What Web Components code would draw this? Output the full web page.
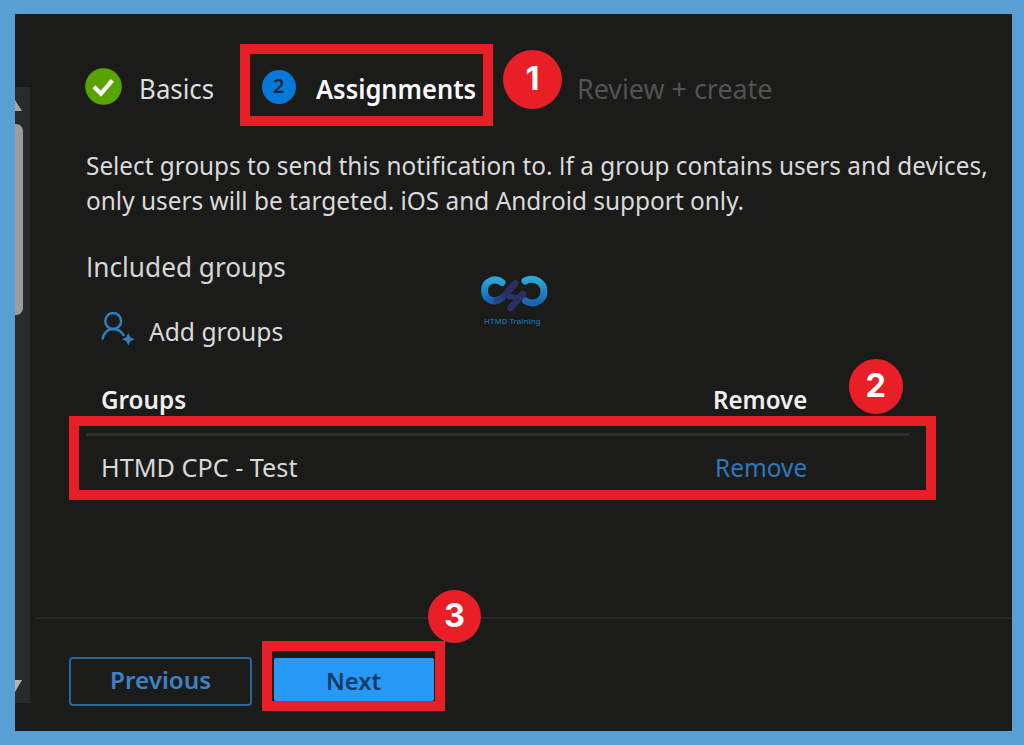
<!DOCTYPE html>
<html lang="en">
<head>
<meta charset="utf-8">
<title>Assignments</title>
<style>
html,body{margin:0;height:100%;overflow:hidden}
body{background:#589fd4;font-family:"Noto Sans","Open Sans",sans-serif}
</style>
</head>
<body>
<notification-wizard></notification-wizard>
<script>
const define = (name, html, setup) => {
  const t = document.createElement('template');
  t.innerHTML = html;
  customElements.define(name, class extends HTMLElement {
    connectedCallback() {
      if (this.shadowRoot) return;
      this.attachShadow({mode: 'open'}).append(t.content.cloneNode(true));
      if (setup) setup(this, this.shadowRoot);
    }
  });
};
const ctx = document.createElement('canvas').getContext('2d');

/* One line of text condensed or widened to a given ink width.
   The capital I is set in Open Sans, which draws it without serifs. */
define('fit-text', `
<style>
:host{display:flex;flex:none}
span{display:block;flex:none;transform-origin:0 50%;white-space:pre}
i{font-style:normal;font-family:"Open Sans",sans-serif;line-height:1}
</style><span></span>`, (el, root) => {
  const span = root.querySelector('span');
  const text = el.getAttribute('text');
  const w = +el.getAttribute('w'), size = +el.getAttribute('size');
  const weight = el.getAttribute('weight') || 400;
  span.innerHTML = text.replace(/\bI/g, '<i>I</i>');
  el.style.width = w + 'px';
  el.style.height = el.style.lineHeight = (el.getAttribute('line') || 36) + 'px';
  span.style.fontSize = size + 'px';
  span.style.fontWeight = weight;
  ctx.font = `${weight} ${size}px "Noto Sans","Open Sans",sans-serif`;
  const m = ctx.measureText(text);
  const left = -m.actualBoundingBoxLeft;
  const bearings = m.width - (m.actualBoundingBoxRight - left);
  const k = w / (span.getBoundingClientRect().width - bearings);
  span.style.transform = `translateX(${-left * k}px) scaleX(${k})`;
});

define('callout-badge', `
<style>
:host{position:absolute;box-sizing:border-box;border-radius:50%;background:#e81f27;color:#fff;
display:flex;align-items:center;justify-content:center;font:650 32.5px/1 Inter,"Liberation Sans",sans-serif;z-index:3}
</style><slot></slot>`);

define('status-dot', `
<style>
:host{display:block;flex:none;width:37px;height:37px}
svg{display:block;width:100%;height:100%}
</style>
<svg viewBox="0 0 37 37"><circle cx="18.5" cy="18.5" r="18.3" fill="#57a300"/>
<path d="M9 18.7l7 7L27.300 12.300" fill="none" stroke="#fff" stroke-width="4.2"/></svg>`);

define('step-number', `
<style>
:host{display:flex;flex:none;width:34.6px;height:34.6px;border-radius:50%;background:#0678d7;color:#0b2547;
align-items:center;justify-content:center;font-size:20px;line-height:1;font-weight:600;box-sizing:border-box;padding-bottom:1px}
</style><slot></slot>`);

define('wizard-steps', `
<style>
:host{display:flex;position:relative;height:82px}
.done{display:flex;width:155px;padding-top:24px;box-sizing:border-box}
.done fit-text{margin:3px 0 0 18.500px}
.current{box-sizing:border-box;width:252.500px;height:82px;border:10px solid #e81f27;display:flex;padding:15.5px 0 0 11.5px}
.current fit-text{margin:1.500px 0 0 20px}
.next{padding:27px 0 0 86.500px}
callout-badge{left:418px;top:6px;width:59px;height:59px}
</style>
<div class="done"><status-dot></status-dot><fit-text text="Basics" size="27.5" w="72" style="color:#dedede"></fit-text></div>
<div class="current"><step-number>2</step-number><fit-text text="Assignments" size="26.5" weight="600" w="159" style="color:#fafafa"></fit-text></div>
<div class="next"><fit-text text="Review + create" size="26.5" w="192.5" style="color:#535353"></fit-text></div>
<callout-badge>1</callout-badge>`);

define('person-add-icon', `
<style>:host{display:block;flex:none;width:34px;height:34px}svg{display:block}</style>
<svg width="34" height="34" viewBox="0 0 34 34" fill="none" stroke="#347fc4" stroke-width="2.5">
<circle cx="12.2" cy="9" r="7.9"/><path d="M1.500 27.500C2.500 21 6.500 16.900 12.200 16.900c4.700 0 8.600 2.600 10.700 7.200"/>
<path d="M27.300 20.900l2 4.300 4.300 2-4.300 2-2 4.300-2-4.300-4.300-2 4.300-2z" fill="#347fc4" stroke="none"/></svg>`);

define('groups-table', `
<style>
:host{display:block;position:relative}
.row{display:flex;align-items:flex-start}
.head{height:34px;padding:1px 0 0 17px}
.head fit-text + fit-text{margin-left:529px}
.frame{box-sizing:border-box;width:867px;height:84px;margin-left:-16px;border:10px solid #e81f27}
hr{margin:7px 17.5px 0 6.5px;border:0;height:2.5px;background:#302e2d}
.body{padding:13.500px 0 0 23.5px}
.body fit-text + fit-text{margin:1px 0 0 419.5px}
callout-badge{left:763.500px;top:-22px;width:54.5px;height:54.5px}
</style>
<div class="row head"><fit-text text="Groups" size="24.5" weight="600" w="84" style="color:#efefef"></fit-text><fit-text text="Remove" size="24.5" weight="600" w="92" style="color:#efefef"></fit-text></div>
<div class="frame"><hr><div class="row body"><fit-text text="HTMD CPC - Test" size="25" w="194.5" style="color:#d8d8d8"></fit-text><fit-text text="Remove" size="24.5" w="89.5" style="color:#2f77bd"></fit-text></div></div>
<callout-badge>2</callout-badge>`);

define('brand-mark', `
<style>
:host{position:absolute;left:464px;top:259px;width:72px;text-align:center}
svg{display:block;width:72px;height:42px}
fit-text{margin:1px 0 0 5px;color:#16699f}
</style>
<svg viewBox="0 0 72 42" fill="none" stroke-linecap="round">
<defs>
<linearGradient id="a" x1="0" y1="0" x2="0" y2="1"><stop offset="0" stop-color="#2ba6d6"/><stop offset="1" stop-color="#1763b4"/></linearGradient>
<linearGradient id="b" x1="0" y1="1" x2="1" y2="0"><stop offset="0" stop-color="#22478a"/><stop offset=".5" stop-color="#2d2d63"/></linearGradient>
</defs>
<path d="M23 9.500C16 4 5.500 8 5.500 17.500c0 8.500 8 12.500 14.500 9" stroke="url(#a)" stroke-width="7"/>
<path d="M46 8c9-4.500 19 1 19 10.500 0 9-9.500 14.500-18.500 9.500" stroke="url(#a)" stroke-width="7"/>
<path d="M17 28c7-1 12-11 19.500-17.500" stroke="url(#b)" stroke-width="6.500"/>
<path d="M30 24c4-2 6 2 9 0" stroke="#2a3470" stroke-width="5"/>
<path d="M31.500 35L44 21" stroke="#2a3067" stroke-width="6.500"/>
</svg>
<fit-text text="HTMD Training" size="7.5" line="10" weight="600" w="57"></fit-text>`);

define('side-scrollbar', `
<style>
:host{display:flex;flex-direction:column;box-sizing:border-box;width:15px;height:616px;margin-top:73px;background:#292a2a}
svg{display:block;flex:none}
.thumb{width:8px;height:191px;margin-top:1px;border-radius:0 7px 7px 0;background:#9c9c9c}
.down{margin-top:auto}
</style>
<svg width="15" height="36" viewBox="0 0 15 36"><path d="M0 13l7 11H0z" fill="#a5a5a5"/></svg>
<div class="thumb"></div>
<svg class="down" width="15" height="26" viewBox="0 0 15 26"><path d="M0 3h7L0 15z" fill="#b4b4b4"/></svg>`);

define('action-bar', `
<style>
:host{display:flex;position:relative;box-sizing:border-box;height:114px;border-top:2px solid #262625;margin-left:5px}
button{box-sizing:border-box;display:flex;margin:0;font:inherit;padding:0}
.prev{margin:38.5px 0 0 34px;width:183px;height:49px;border:2px solid #2a6596;border-radius:4px;background:none;color:#3e82c6;padding:3px 0 0 41px}
.frame{box-sizing:border-box;width:183px;height:70px;margin:22.5px 0 0 10px;border:10px solid #e81f27;padding:6.500px 1px 0 2px}
.next{width:160px;height:43.500px;border:0;border-radius:2px;background:#2699f7;color:#0f3a64;padding:5px 0 0 54px}
callout-badge{left:393px;top:-29px;width:53px;height:53px}
</style>
<button class="prev"><fit-text text="Previous" size="24" weight="600" w="98.5"></fit-text></button>
<div class="frame"><button class="next"><fit-text text="Next" size="24" weight="600" w="53.5"></fit-text></button></div>
<callout-badge>3</callout-badge>`);

define('notification-wizard', `
<style>
:host{display:block;box-sizing:border-box;width:1024px;height:745px;padding:14px 12.5px 15px 15px;background:#589fd4}
.panel{position:relative;display:grid;grid-template-columns:15px minmax(0,1fr);height:716.5px;background:#1b1b1a;overflow:hidden}
main{display:flex;flex-direction:column;min-width:0}
.content{flex:1;padding:30px 0 0 55px;min-height:0}
.lead{padding:22px 0 0 1.500px;color:#dadada}
.title{margin:31px 0 0 2px;color:#d6d6d6}
.add{display:flex;margin:26.500px 0 0 16px;color:#dadada}
.add fit-text{margin:1px 0 0 14px}
groups-table{margin:32.5px 0 0 0}
</style>
<div class="panel">
<side-scrollbar></side-scrollbar>
<main>
<div class="content">
<wizard-steps></wizard-steps>
<div class="lead">
<fit-text text="Select groups to send this notification to. If a group contains users and devices," size="25" line="35" w="899"></fit-text>
<fit-text text="only users will be targeted. iOS and Android support only." size="25" line="35" w="655.5"></fit-text>
</div>
<fit-text class="title" text="Included groups" size="27" w="198"></fit-text>
<div class="add"><person-add-icon></person-add-icon><fit-text text="Add groups" size="25.5" w="134"></fit-text></div>
<groups-table></groups-table>
</div>
<action-bar></action-bar>
</main>
<brand-mark></brand-mark>
</div>`);
</script>
</body>
</html>
